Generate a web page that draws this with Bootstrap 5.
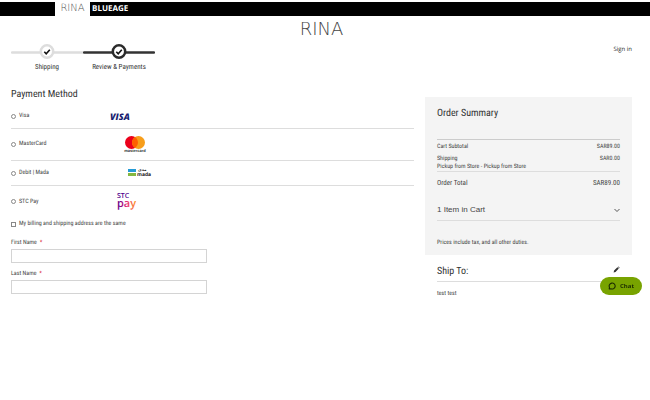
<!DOCTYPE html>
<html lang="en">
<head>
<meta charset="utf-8">
<meta name="viewport" content="width=device-width, initial-scale=1">
<title>RINA – Review &amp; Payments</title>
<link href="https://cdn.jsdelivr.net/npm/bootstrap@5.3.0/dist/css/bootstrap.min.css" rel="stylesheet">
<style>
body{font-family:"Roboto Condensed","Open Sans","Liberation Sans",sans-serif;font-weight:400;font-size:6px;line-height:8px;color:#444;background:#fff;text-rendering:geometricPrecision}
a{color:inherit;text-decoration:none}
.topbar{background:#000;height:14px;margin-top:2px;padding-left:55px}
.brand-tab{width:35px;background:#fff;color:#555;font:200 10px/14px "DejaVu Sans",sans-serif}
.brand-tab-dark{color:#fff;font:700 8px/14px "Open Sans",sans-serif;padding-left:2px}
.shell{padding:0 18px 0 11px}
.logo{font:200 18px/26px "DejaVu Sans",sans-serif;color:#444;padding-top:1px}
.signin{font:6px/12px "Open Sans",sans-serif;color:#222}
.progress-row{height:41px}
.step{width:72px;font-size:7px;line-height:10px;font-weight:400;color:#333}
.step svg{display:block;width:100%;height:19px}
h1,h2{font-size:10px;line-height:18px;padding-top:2px;margin:0;font-weight:400;color:#333}
.pay-col{padding-right:11px}
.method{height:25px;border-bottom:1px solid #ddd}
.method-tall{height:32px;padding-bottom:1px}
.method label,.same label{width:92px;padding-left:3px}
.form-check-input.tick{width:5px;height:5px;margin:0;border-color:#888;flex:none}
.same{height:12px}
.same label{width:auto}
.fields{width:196px;padding-top:7px}
.fields label{display:block;line-height:12px}
.fields .form-control{height:14px;min-height:0;padding:0 4px;font-size:6px;border:1px solid #d4d4d4;border-radius:0;margin-bottom:5px}
.aside-col{padding-top:13px}
.summary{background:#f4f4f4;padding:6px 12px 0;height:158px}
.totals{margin-top:16px;border-top:1px solid #ccc;border-bottom:1px solid #ddd;width:100%}
.totals th,.totals td{font-weight:400;padding:0;vertical-align:top}
.totals .first>*{height:15px;padding-top:3px}
.grand{font-size:7px;line-height:10px;padding:6px 0 0;height:28px}
.cart-toggle{font:8px/20px "Liberation Sans",sans-serif;color:#444;border:0;border-bottom:1px solid #ddd;background:none;padding:0;width:100%}
.tax{margin-top:18px}
.ship{padding:5px 12px 0}
.ship-head{border-bottom:1px solid #ddd;height:22px}
.chat{position:fixed;right:8px;top:277px;width:42px;height:18px;border:0;border-radius:9px;background:#78a300;color:#1b2b00;font:700 6px/18px "Open Sans",sans-serif;padding:0}
.visa-word{font:italic 800 9px "Open Sans",sans-serif;fill:#1a1f71}
.mc-word{font:700 4px "Liberation Sans",sans-serif;fill:#333}
.mada-word{font:700 5px "Open Sans",sans-serif;fill:#222}
.mada-ar{font:700 4px "DejaVu Sans",sans-serif;fill:#222}
.stc-word{font:600 7px "Open Sans",sans-serif;fill:#4f008c}
.pay-word{font:600 11px "Open Sans",sans-serif;fill:url(#payfill)}
</style>
</head>
<body>
<nav class="topbar d-flex" aria-label="Brands">
  <a href="#" class="brand-tab text-center">RINA</a>
  <a href="#" class="brand-tab-dark">BLUEAGE</a>
</nav>
<div class="shell">
  <header>
    <div class="text-center"><a href="#" class="logo d-block">RINA</a></div>
    <div class="progress-row d-flex justify-content-between align-items-start">
      <div class="d-flex text-center">
        <div class="step">
          <svg viewBox="0 0 72 19"><path d="M1 9.500H72" stroke="#ddd" stroke-width="2.500" stroke-linecap="round"/><circle cx="36" cy="8.500" r="6.200" fill="#fff" stroke="#ddd" stroke-width="2.500"/><path d="M33.300 8.700l1.900 2 3.600-4" fill="none" stroke="#111" stroke-width="1.600"/></svg>
          Shipping
        </div>
        <div class="step">
          <svg viewBox="0 0 72 19"><path d="M1 9.500H71" stroke="#333" stroke-width="2.500" stroke-linecap="round"/><circle cx="36" cy="8.500" r="6.200" fill="#fff" stroke="#2b2b2b" stroke-width="2.500"/><path d="M33.300 8.700l1.900 2 3.600-4" fill="none" stroke="#111" stroke-width="1.600"/></svg>
          Review &amp; Payments
        </div>
      </div>
      <a href="#" class="signin">Sign in</a>
    </div>
  </header>
  <main class="row g-0">
    <section class="col-8 pay-col">
      <h1>Payment Method</h1>
      <div>
        <div class="method d-flex align-items-center">
          <input class="form-check-input tick" type="radio" name="pay" id="visa"><label for="visa">Visa</label>
          <svg width="40" height="12" role="img" aria-label="Visa"><text class="visa-word" x="2" y="10">VISA</text></svg>
        </div>
        <div class="method method-tall d-flex align-items-center">
          <input class="form-check-input tick" type="radio" name="pay" id="mc"><label for="mc">MasterCard</label>
          <svg width="50" height="20" role="img" aria-label="Mastercard"><circle cx="23.500" cy="8.500" r="6.500" fill="#eb001b"/><circle cx="30.500" cy="8.500" r="6.500" fill="#f79e1b"/><path d="M27 3.050a6.500 6.500 0 0 1 0 10.900a6.500 6.500 0 0 1 0-10.900" fill="#ff5f00"/><text class="mc-word" x="27" y="18" text-anchor="middle">mastercard</text></svg>
        </div>
        <div class="method d-flex align-items-center">
          <input class="form-check-input tick" type="radio" name="pay" id="mada"><label for="mada">Debit | Mada</label>
          <svg width="54" height="14" role="img" aria-label="Mada"><rect x="20" y="3" width="8" height="3" fill="#259bd6"/><rect x="20" y="7" width="8" height="3" fill="#84b740"/><text class="mada-ar" x="30" y="5">مدى</text><text class="mada-word" x="29" y="10">mada</text></svg>
        </div>
        <div class="method method-tall d-flex align-items-center border-0">
          <input class="form-check-input tick" type="radio" name="pay" id="stc"><label for="stc">STC Pay</label>
          <svg width="50" height="20" role="img" aria-label="STC Pay"><defs><linearGradient id="payfill"><stop offset="0" stop-color="#4f008c"/><stop offset=".5" stop-color="#e6287a"/><stop offset="1" stop-color="#ff9a1f"/></linearGradient></defs><text class="stc-word" x="9" y="6">STC</text><text class="pay-word" x="9" y="15">pay</text></svg>
        </div>
      </div>
      <div class="same d-flex align-items-center">
        <input class="form-check-input tick rounded-0" type="checkbox" id="same"><label for="same">My billing and shipping address are the same</label>
      </div>
      <form class="fields">
        <label for="first">First Name &nbsp;<span class="text-danger">*</span></label>
        <input class="form-control" id="first" type="text">
        <label for="last">Last Name &nbsp;<span class="text-danger">*</span></label>
        <input class="form-control" id="last" type="text">
      </form>
    </section>
    <aside class="col-4 aside-col">
      <section class="summary">
        <h2>Order Summary</h2>
        <table class="totals">
          <tbody>
            <tr class="first"><th scope="row">Cart Subtotal</th><td class="text-end">SAR89.00</td></tr>
            <tr><th scope="row">Shipping<br>Pickup from Store - Pickup from Store</th><td class="text-end">SAR0.00</td></tr>
          </tbody>
        </table>
        <div class="grand d-flex justify-content-between"><span>Order Total</span><span>SAR89.00</span></div>
        <button type="button" class="cart-toggle d-flex justify-content-between align-items-center"><span>1 Item in Cart</span>
          <svg width="6" height="6" viewBox="0 0 6 6"><path d="M.5 2l2.500 2.500L5.500 2" fill="none" stroke="#444" stroke-width=".9"/></svg></button>
        <div class="tax">Prices include tax, and all other duties.</div>
      </section>
      <section class="ship">
        <div class="ship-head d-flex justify-content-between align-items-center"><h2>Ship To:</h2>
          <a href="#" aria-label="Edit"><svg width="7" height="7" viewBox="0 0 7 7"><path d="M.6 6.400l.5-1.900L4.400 1.200l1.400 1.400-3.300 3.300zM4.900.8l.5-.4 1.300 1.300-.5.5z" fill="#333"/></svg></a></div>
        <div class="pt-2">test test</div>
      </section>
    </aside>
  </main>
</div>
<button type="button" class="chat d-flex align-items-center justify-content-center gap-1">
  <svg width="8" height="8" viewBox="0 0 8 8"><path d="M1.200 7l.3-1.600A3 3 0 1 1 3 6.800z" fill="none" stroke="#1b2b00" stroke-width="1.100" stroke-linejoin="round"/></svg>Chat
</button>
<script src="https://cdn.jsdelivr.net/npm/bootstrap@5.3.0/dist/js/bootstrap.bundle.min.js"></script>
</body>
</html>
